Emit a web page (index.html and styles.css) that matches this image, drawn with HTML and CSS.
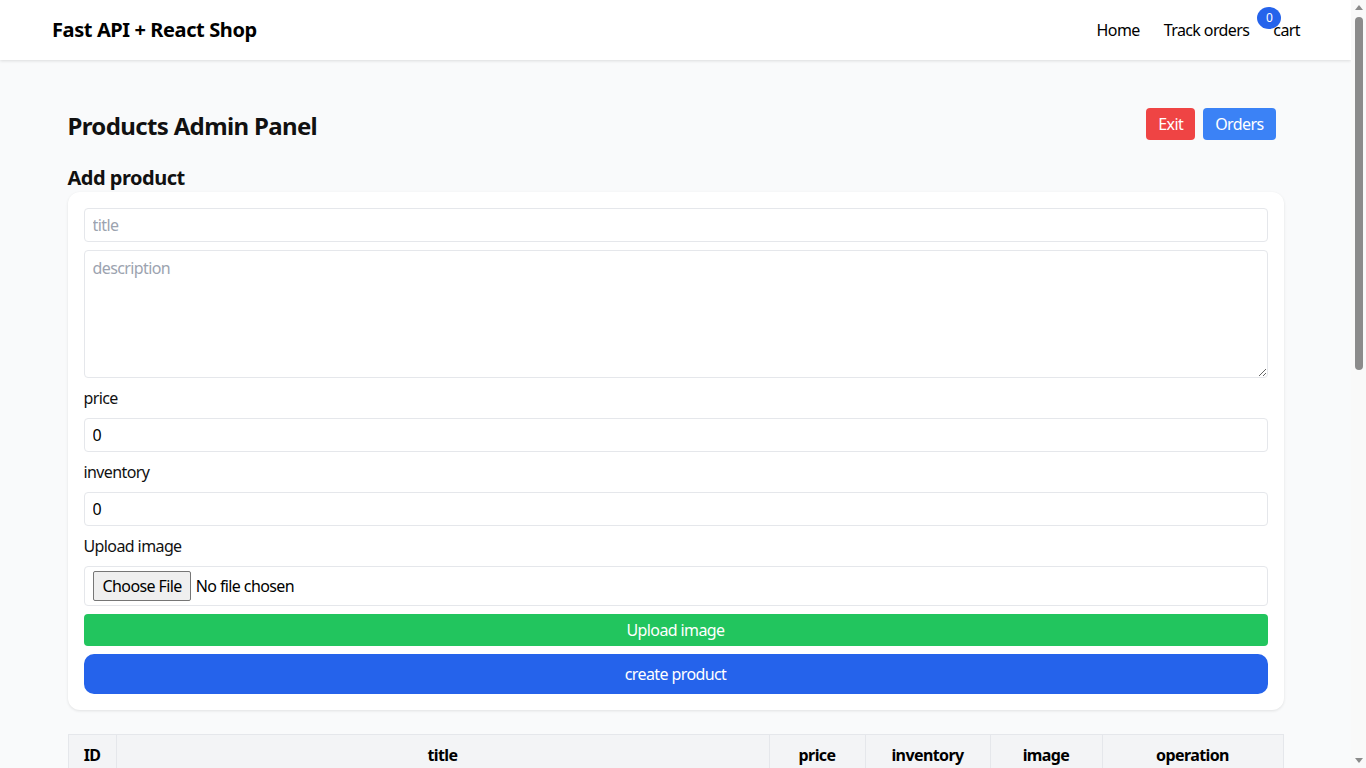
FILE: index.html
```html
<!DOCTYPE html>
<html lang="en">
<head>
<meta charset="utf-8">
<title>Fast API + React Shop</title>
<link rel="stylesheet" href="styles.css">
</head>
<body>
<header class="navbar">
  <div class="brand">Fast API + React Shop</div>
  <nav class="nav-links">
    <a class="nav-link" href="#">Home</a>
    <a class="nav-link" href="#">Track orders</a>
    <a class="nav-link cart-link" href="#">cart<span class="badge">0</span></a>
  </nav>
</header>
<main class="container">
  <div class="page-head">
    <h1 class="page-title">Products Admin Panel</h1>
    <div class="head-actions">
      <button class="btn btn-red">Exit</button>
      <button class="btn btn-blue">Orders</button>
    </div>
  </div>
  <h2 class="section-title">Add product</h2>
  <form class="card">
    <input class="field" type="text" placeholder="title">
    <textarea class="field field-area" placeholder="description"></textarea>
    <label class="label">price</label>
    <input class="field" type="number" value="0">
    <label class="label">inventory</label>
    <input class="field" type="number" value="0">
    <label class="label">Upload image</label>
    <div class="field file-box"><input class="file-input" type="file"></div>
    <button type="button" class="btn-wide btn-green">Upload image</button>
    <button type="button" class="btn-wide btn-create">create product</button>
  </form>
  <table class="table">
    <thead>
      <tr>
        <th class="col-id">ID</th>
        <th class="col-title">title</th>
        <th class="col-price">price</th>
        <th class="col-inv">inventory</th>
        <th class="col-img">image</th>
        <th class="col-op">operation</th>
      </tr>
    </thead>
    <tbody>
      <tr><td></td><td></td><td></td><td></td><td></td><td></td></tr>
    </tbody>
  </table>
</main>
<div class="scrollbar" aria-hidden="true">
  <div class="sb-arrow sb-up"></div>
  <div class="sb-track"><div class="sb-thumb"></div></div>
  <div class="sb-arrow sb-down"></div>
</div>
</body>
</html>
```
FILE: styles.css
```css
* { box-sizing: border-box; }
html, body { margin: 0; padding: 0; }
body {
  font-family: "Noto Sans", "Open Sans", sans-serif;
  font-size: 16px;
  line-height: 24px;
  letter-spacing: -0.6px;
  color: #111;
  background: #f9fafb;
  min-height: 1610px;
  padding-right: 15px;
}
.scrollbar {
  position: fixed;
  top: 0;
  right: 0;
  bottom: 0;
  width: 15px;
  background: #f9f9f9;
  display: flex;
  flex-direction: column;
  align-items: center;
}
.sb-arrow { width: 15px; height: 15px; display: flex; justify-content: center; }
.sb-up { align-items: flex-start; padding-top: 5px; }
.sb-down { align-items: flex-end; padding-bottom: 5px; }
.sb-up::before {
  content: "";
  border-left: 4px solid transparent;
  border-right: 4px solid transparent;
  border-bottom: 5px solid #8b8b8b;
}
.sb-down::before {
  content: "";
  border-left: 4px solid transparent;
  border-right: 4px solid transparent;
  border-top: 5px solid #8b8b8b;
}
.sb-track { flex: 1; width: 15px; display: flex; justify-content: center; padding-top: 2px; }
.sb-thumb { width: 8px; height: 353px; background: #8b8b8b; border-radius: 4px; }
.navbar {
  height: 60px;
  background: #fff;
  display: flex;
  align-items: center;
  justify-content: space-between;
  padding: 0 51px 0 52px;
  box-shadow: 0 1px 3px rgba(0,0,0,0.12);
  position: relative;
}
.brand { font-size: 20px; font-weight: 700; color: #000; letter-spacing: -0.4px; }
.nav-links { display: flex; gap: 24px; }
.nav-link { color: #000; text-decoration: none; font-size: 16px; }
.cart-link { position: relative; }
.badge {
  position: absolute;
  top: -11px;
  left: -16px;
  width: 24px;
  height: 22px;
  border-radius: 50%;
  background: #2563eb;
  color: #fff;
  font-size: 12px;
  line-height: 22px;
  letter-spacing: 0;
  text-align: center;
}
.container {
  max-width: 1280px;
  margin: 0 auto;
  padding: 48px 32px;
}
.page-head {
  display: flex;
  justify-content: space-between;
  align-items: center;
  padding-right: 8px;
  height: 32px;
}
.page-title { margin: 0; font-size: 24px; line-height: 32px; font-weight: 700; letter-spacing: -0.65px; position: relative; top: 2px; }
.head-actions { display: flex; gap: 8px; }
.btn {
  height: 32px;
  border: none;
  border-radius: 4px;
  color: #fff;
  font: inherit;
  letter-spacing: inherit;
  padding: 0 12px;
}
.btn-red { background: #ef4444; }
.btn-blue { background: #3b82f6; }
.section-title { margin: 24px 0 0; font-size: 20px; line-height: 28px; font-weight: 700; letter-spacing: -0.5px; }
.card {
  background: #fff;
  border-radius: 12px;
  box-shadow: 0 1px 3px rgba(0,0,0,0.1);
  padding: 16px;
  display: flex;
  flex-direction: column;
  gap: 8px;
}
.field {
  width: 100%;
  height: 34px;
  border: 1px solid #e5e7eb;
  border-radius: 4px;
  padding: 0 8px;
  font: inherit;
  letter-spacing: inherit;
  color: #000;
  background: #fff;
  outline: none;
}
.field::placeholder { color: #9ca3af; }
.field-area { height: 128px; padding: 5px 8px; resize: vertical; }
.label { display: block; }
.file-box { height: 40px; display: flex; align-items: center; }
.file-input { font: inherit; letter-spacing: inherit; color: #000; }
.file-input::file-selector-button {
  font: inherit;
  letter-spacing: inherit;
  color: #000;
  height: 30px;
  padding: 0 8px 0 9px;
  margin-right: 5px;
  border: 1px solid #767676;
  border-radius: 2px;
  background: #efefef;
}
.btn-wide {
  width: 100%;
  border: none;
  color: #fff;
  font: inherit;
  letter-spacing: inherit;
}
.btn-green { height: 32px; background: #22c55e; border-radius: 4px; }
.btn-create { height: 40px; background: #2563eb; border-radius: 10px; }
.table {
  width: 100%;
  margin-top: 24px;
  border-collapse: collapse;
  background: #f3f4f6;
  border: 1px solid #e5e7eb;
}
.table th {
  border: 1px solid #e5e7eb;
  font-weight: 700;
  padding: 8px 16px;
  text-align: center;
  color: #000;
}
.table th.col-id { padding: 8px 15px; }
.table td { border: 1px solid #e5e7eb; height: 120px; background: #fff; }
.col-id { width: 48px; }
.col-price { width: 96px; }
.col-inv { width: 125px; }
.col-img { width: 112px; }
.col-op { width: 181px; }
```
